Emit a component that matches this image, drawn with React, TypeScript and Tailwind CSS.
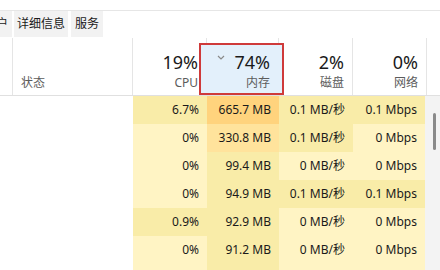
import React from "react";

type Row = {
  cpu: string;
  mem: string;
  disk: string;
  net: string;
  cpuBg: string;
  memBg: string;
  diskBg: string;
  netBg: string;
};

const LIGHT = "bg-[#fff4c4]";
const MID = "bg-[#f9eca8]";

const rows: Row[] = [
  { cpu: "6.7%", mem: "665.7 MB", disk: "0.1 MB/秒", net: "0.1 Mbps", cpuBg: MID, memBg: "bg-[#ffd37d]", diskBg: MID, netBg: MID },
  { cpu: "0%", mem: "330.8 MB", disk: "0.1 MB/秒", net: "0 Mbps", cpuBg: LIGHT, memBg: "bg-[#ffe39c]", diskBg: MID, netBg: LIGHT },
  { cpu: "0%", mem: "99.4 MB", disk: "0 MB/秒", net: "0 Mbps", cpuBg: LIGHT, memBg: MID, diskBg: LIGHT, netBg: LIGHT },
  { cpu: "0%", mem: "94.9 MB", disk: "0.1 MB/秒", net: "0.1 Mbps", cpuBg: LIGHT, memBg: MID, diskBg: MID, netBg: MID },
  { cpu: "0.9%", mem: "92.9 MB", disk: "0 MB/秒", net: "0 Mbps", cpuBg: MID, memBg: MID, diskBg: LIGHT, netBg: LIGHT },
  { cpu: "0%", mem: "91.2 MB", disk: "0 MB/秒", net: "0 Mbps", cpuBg: LIGHT, memBg: MID, diskBg: LIGHT, netBg: LIGHT },
  // last row is only partly on screen, no text visible
  { cpu: "", mem: "", disk: "", net: "", cpuBg: LIGHT, memBg: MID, diskBg: LIGHT, netBg: LIGHT },
];

const HeadCell: React.FC<{ pct: string; label: string; w: string; children?: React.ReactNode }> = ({ pct, label, w, children }) => (
  <div className={`${w} relative flex flex-col items-end justify-end pr-2 pb-[4px] border-r border-[#e5e5e5]`}>
    {children}
    <span className="relative text-[18px] leading-[22px] mb-[2px] text-[#1a1a1a]">{pct}</span>
    <span className="relative text-[12px] leading-[16px] text-[#5c5c5c]">{label}</span>
  </div>
);

const App: React.FC = () => {
  return (
    <div className="w-[440px] h-[270px] overflow-hidden bg-white text-[#1a1a1a] font-['Noto_Sans','Noto_Sans_CJK_SC',sans-serif]">
      <div className="h-[10px]" />
      {/* tabs */}
      <div className="h-[28px] flex border-t border-[#e6e6e6] overflow-hidden">
        <div className="flex items-center bg-[#f2f2f2] h-[26px] w-[12px] overflow-hidden justify-end pr-[4px]">
          <span className="text-[12px] whitespace-nowrap shrink-0">户</span>
        </div>
        <div className="ml-[2px] flex items-center bg-[#f2f2f2] h-[26px] px-[3px] text-[12px]">详细信息</div>
        <div className="ml-[3px] flex items-center bg-[#f2f2f2] h-[26px] px-[4px] text-[12px]">服务</div>
        <div className="flex-1" />
      </div>
      {/* header */}
      <div className="h-[58px] flex border-b border-[#e0e0e0]">
        <div className="w-[13px] border-r border-[#e5e5e5]" />
        <div className="w-[120px] border-r border-[#e5e5e5] flex items-end pl-[8px] pb-[4px]">
          <span className="text-[12px] leading-[16px] text-[#5c5c5c]">状态</span>
        </div>
        <HeadCell pct="19%" label="CPU" w="w-[74px]" />
        <HeadCell pct="74%" label="内存" w="w-[72px]">
          <div className="absolute left-[-8px] right-[-6px] top-[5px] bottom-0 border-2 border-[#cf3a3a] bg-[#e3f0fb]" />
          <svg className="absolute left-[10px] top-[17px]" width="8" height="5" viewBox="0 0 8 5">
            <path d="M1 1 L4 4 L7 1" fill="none" stroke="#8a8a8a" strokeWidth="1.2" />
          </svg>
        </HeadCell>
        <HeadCell pct="2%" label="磁盘" w="w-[74px]" />
        <HeadCell pct="0%" label="网络" w="w-[74px]" />
        <div className="flex-1" />
      </div>
      {/* rows */}
      <div className="flex">
        <div className="flex flex-col">
          {rows.map((r, i) => (
            <div key={i} className="flex h-[28px] text-[12px]">
              <div className="w-[133px]" />
              <div className={`w-[74px] ${r.cpuBg} flex items-center justify-end pr-2`}>{r.cpu}</div>
              <div className={`w-[72px] ${r.memBg} flex items-center justify-end pr-2`}>{r.mem}</div>
              <div className={`w-[74px] ${r.diskBg} flex items-center justify-end pr-2`}>{r.disk}</div>
              <div className={`w-[72px] ${r.netBg} flex items-center justify-end pr-2`}>{r.net}</div>
            </div>
          ))}
        </div>
        <div className="flex-1 bg-[#f3f3f3] pt-[17px] pl-[8px]">
          <div className="w-[3px] h-[37px] rounded-full bg-[#8a8a8a]" />
        </div>
      </div>
    </div>
  );
};

export default App;
